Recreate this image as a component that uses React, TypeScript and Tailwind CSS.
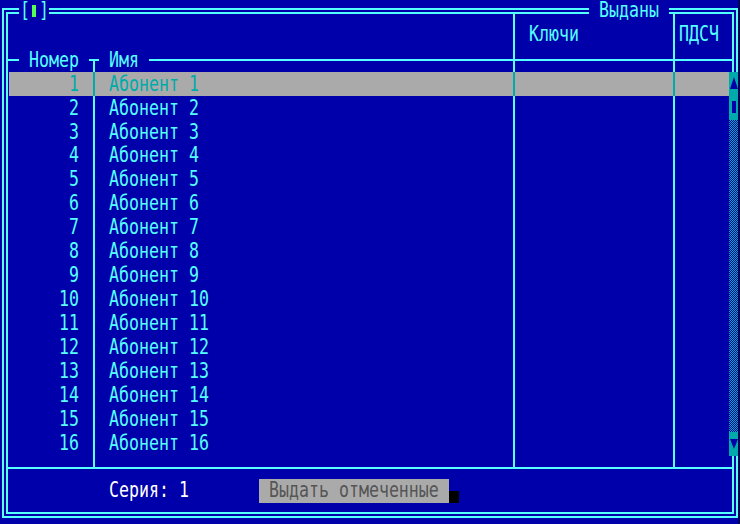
import type { ReactNode } from "react";

const rows = Array.from({ length: 16 }, (_, i) => i + 1);

const Txt = ({ children }: { children: ReactNode }) => (
  <span className="inline-block scale-y-[1.3] whitespace-pre">{children}</span>
);

const Label = ({ children }: { children: ReactNode }) => (
  <span className="inline-block scale-y-[1.3] whitespace-pre leading-none">{children}</span>
);

const Spacer = ({ h }: { h: string }) => (
  <div className={`flex ${h}`}>
    <div className="w-[85px]" />
    <div className="w-[420px] border-l-2 border-[#55ffff]" />
    <div className="w-[160px] border-l-2 border-[#55ffff]" />
    <div className="flex-1 border-l-2 border-[#55ffff]" />
  </div>
);

const Row = ({ n, active }: { n: number; active?: boolean }) => {
  const line = active ? "border-[#00aaaa]" : "border-[#55ffff]";
  return (
    <div
      className={`flex h-[24px] leading-[24px] ${
        active ? "ml-px bg-[#aaaaaa] text-[#00aaaa]" : "text-[#55ffff]"
      }`}
    >
      <div className={`${active ? "w-[84px]" : "w-[85px]"} pr-[14px] text-right`}>
        <Txt>{n}</Txt>
      </div>
      <div className={`w-[420px] border-l-2 ${line} pl-[14px]`}>
        <Txt>Абонент {n}</Txt>
      </div>
      <div className={`w-[160px] border-l-2 ${line}`} />
      <div className={`flex-1 border-l-2 ${line}`} />
    </div>
  );
};

const Scrollbar = () => (
  <div className="absolute left-[729px] top-[72px] flex h-[384px] w-[10px] flex-col">
    <div className="h-[24px] bg-[#00aaaa]">
      <svg width="10" height="24" viewBox="0 0 10 24">
        <polygon points="5,5 1,17 9,17" fill="#0000aa" />
      </svg>
    </div>
    <div className="h-[24px] bg-[#00aaaa]">
      <svg width="10" height="24" viewBox="0 0 10 24">
        <rect x="3" y="5" width="4" height="12" fill="#0000aa" />
      </svg>
    </div>
    <div className="flex-1 bg-[repeating-conic-gradient(#00aaaa_0_25%,#0000aa_0_50%)] bg-[length:2px_2px]" />
    <div className="h-[24px] bg-[#00aaaa]">
      <svg width="10" height="24" viewBox="0 0 10 24">
        <polygon points="1,7 9,7 5,17" fill="#0000aa" />
      </svg>
    </div>
  </div>
);

export default function App() {
  return (
    <div className="relative h-[524px] w-[740px] overflow-hidden bg-[#0000aa] font-['DejaVu_Sans_Mono',monospace] text-[16.6px] leading-[24px] text-[#55ffff]">
      <div className="ml-[2px] mt-[8px] h-[510px] w-[736px] border-2 border-[#55ffff] p-[2px]">
        <div className="flex h-full w-full flex-col border-2 border-[#55ffff]">
          {/* header */}
          <div className="flex h-[45px]">
            <div className="w-[505px]" />
            <div className="w-[160px] border-l-2 border-[#55ffff] pl-[14px] pt-[8px]">
              <Txt>Ключи</Txt>
            </div>
            <div className="flex-1 border-l-2 border-[#55ffff] pl-[4px] pt-[8px]">
              <Txt>ПДСЧ</Txt>
            </div>
          </div>

          <div className="flex h-[2px] items-center">
            <div className="h-[2px] w-[11px] bg-[#55ffff]" />
            <div className="w-[70px] shrink-0 pl-[10px] leading-[24px]">
              <Txt>Номер</Txt>
            </div>
            <div className="h-[2px] w-[10px] bg-[#55ffff]" />
            <div className="w-[50px] shrink-0 pl-[10px] leading-[24px]">
              <Txt>Имя</Txt>
            </div>
            <div className="h-[2px] flex-1 bg-[#55ffff]" />
          </div>

          {/* body */}
          <div className="flex h-[406px] flex-col">
            <Spacer h="h-[11px]" />
            {rows.map((n) => (
              <Row key={n} n={n} active={n === 1} />
            ))}
            <Spacer h="h-[11px]" />
          </div>

          <div className="h-[2px] bg-[#55ffff]" />

          {/* footer */}
          <div className="flex flex-1 pl-[101px] pt-[10px]">
            <div className="w-[150px] text-white">
              <Txt>Серия: 1</Txt>
            </div>
            <div className="h-[24px] w-[190px] bg-[#aaaaaa] pl-[10px] text-[#555555]">
              <Txt>Выдать отмеченные</Txt>
            </div>
            <div className="mt-[12px] h-[12px] w-[10px] bg-black" />
          </div>
        </div>
      </div>

      {/* title labels over the top border */}
      <div className="absolute left-[19px] top-0 flex h-[22px] w-[30px] items-center bg-[#0000aa]">
        <span className="w-[10px] pl-[1px]">
          <Label>[</Label>
        </span>
        <span className="flex w-[10px] justify-center">
          <span className="h-[12px] w-[4px] bg-[#55ff55]" />
        </span>
        <span className="w-[10px]">
          <Label>]</Label>
        </span>
      </div>
      <div className="absolute left-[589px] top-0 flex h-[22px] w-[80px] items-center bg-[#0000aa] pl-[10px]">
        <Label>Выданы</Label>
      </div>

      <Scrollbar />

      <div className="absolute right-0 top-0 h-full w-[2px] bg-[repeating-conic-gradient(#000000_0_25%,#0000aa_0_50%)] bg-[length:2px_2px]" />
    </div>
  );
}
